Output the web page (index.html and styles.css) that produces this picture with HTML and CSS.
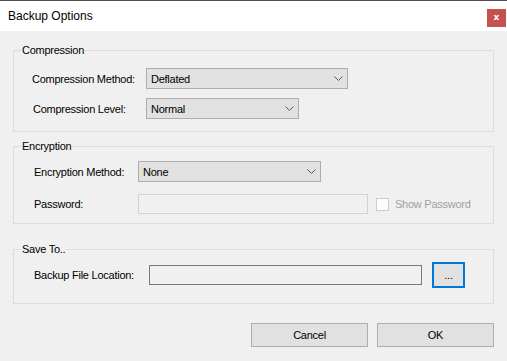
FILE: index.html
```html
<!DOCTYPE html>
<html>
<head>
<meta charset="utf-8">
<link rel="stylesheet" href="styles.css">
</head>
<body>
<div class="window">
  <div class="titlebar">
    <span class="title">Backup Options</span>
    <span class="close">x</span>
  </div>
  <div class="content">
    <section class="group g1">
      <span class="legend">Compression</span>
      <div class="row">
        <span class="label l1">Compression Method:</span>
        <div class="select s1"><span>Deflated</span><svg class="chev" width="9" height="5" viewBox="0 0 9 5"><path d="M0.5 0.5 L4.5 4.5 L8.5 0.5" fill="none" stroke="#5a5a5a" stroke-width="1"/></svg></div>
      </div>
      <div class="row">
        <span class="label l1 l1b">Compression Level:</span>
        <div class="select s2"><span>Normal</span><svg class="chev" width="9" height="5" viewBox="0 0 9 5"><path d="M0.5 0.5 L4.5 4.5 L8.5 0.5" fill="none" stroke="#5a5a5a" stroke-width="1"/></svg></div>
      </div>
    </section>
    <section class="group g2">
      <span class="legend">Encryption</span>
      <div class="row">
        <span class="label l2">Encryption Method:</span>
        <div class="select s3"><span>None</span><svg class="chev" width="9" height="5" viewBox="0 0 9 5"><path d="M0.5 0.5 L4.5 4.5 L8.5 0.5" fill="none" stroke="#5a5a5a" stroke-width="1"/></svg></div>
      </div>
      <div class="row">
        <span class="label l2">Password:</span>
        <div class="input pwd"></div>
        <span class="check"></span>
        <span class="check-label">Show Password</span>
      </div>
    </section>
    <section class="group g3">
      <span class="legend">Save To..</span>
      <div class="row">
        <span class="label l3">Backup File Location:</span>
        <div class="input loc"></div>
        <div class="browse">...</div>
      </div>
    </section>
    <div class="actions">
      <div class="btn">Cancel</div>
      <div class="btn">OK</div>
    </div>
  </div>
</div>
</body>
</html>
```

FILE: styles.css
```css
html, body {
  margin: 0;
  padding: 0;
  background: #f0f0f0;
}
body {
  width: 507px;
  height: 361px;
  overflow: hidden;
  font-family: "Liberation Sans", Arial, sans-serif;
  font-size: 11px;
  letter-spacing: -0.25px;
  color: #000;
}
.window {
  width: 507px;
}
.titlebar {
  border-top: 1px solid #4f4f4f;
  height: 30px;
  background: #fff;
  display: flex;
  justify-content: space-between;
  align-items: flex-start;
}
.title {
  font-family: "Liberation Sans", Arial, sans-serif;
  font-size: 12px;
  letter-spacing: 0;
  line-height: 30px;
  padding-left: 8px;
  color: #000;
}
.close {
  margin-top: 8px;
  margin-right: 1px;
  width: 19px;
  height: 18px;
  background: #c75050;
  color: #fff;
  font-family: "DejaVu Sans", sans-serif;
  font-weight: bold;
  font-size: 9px;
  letter-spacing: 0;
  line-height: 17px;
  text-align: center;
}
.content {
  padding: 0 13px;
}
.group {
  position: relative;
  border: 1px solid #dcdcdc;
  display: flex;
  flex-direction: column;
}
.legend {
  position: absolute;
  top: -7px;
  left: 7px;
  padding: 0 1px;
  background: #f0f0f0;
  line-height: 13px;
}
.g1 {
  margin-top: 19px;
  padding: 17px 0 12px 18px;
  gap: 9px;
}
.g2 {
  margin-top: 14px;
  padding: 14px 0 9px 20px;
  gap: 12px;
}
.g3 {
  margin-top: 25px;
  padding: 12px 0 15px 20px;
}
.row {
  display: flex;
  align-items: center;
}
.label {
  flex: none;
}
.l1 { width: 114px; }
.l1b { padding-left: 1px; width: 113px; }
.l2 { width: 104px; }
.l3 { width: 115px; }
.select {
  box-sizing: border-box;
  height: 21px;
  border: 1px solid #adadad;
  background: #e1e1e1;
  display: flex;
  align-items: center;
  justify-content: space-between;
  padding: 0 4px 0 4px;
}
.chev {
  display: block;
}
.s1 { width: 202px; }
.s2 { width: 153px; }
.s3 { width: 183px; }
.input {
  box-sizing: border-box;
  height: 20px;
  background: #f0f0f0;
}
.pwd {
  width: 230px;
  border: 1px solid #d2d2d2;
}
.check {
  box-sizing: border-box;
  width: 13px;
  height: 13px;
  margin-left: 8px;
  border: 1px solid #cccccc;
  background: #fcfcfc;
}
.check-label {
  margin-left: 6px;
  color: #a0a0a0;
}
.loc {
  width: 273px;
  border: 1px solid #7a7a7a;
}
.browse {
  box-sizing: border-box;
  width: 33px;
  height: 26px;
  margin-left: 10px;
  border: 2px solid #0078d7;
  background: #e1e1e1;
  text-align: center;
  line-height: 22px;
}
.actions {
  margin-top: 19px;
  display: flex;
  justify-content: flex-end;
  gap: 9px;
}
.btn {
  box-sizing: border-box;
  width: 117px;
  height: 24px;
  border: 1px solid #adadad;
  background: #e1e1e1;
  text-align: center;
  line-height: 22px;
}
```
